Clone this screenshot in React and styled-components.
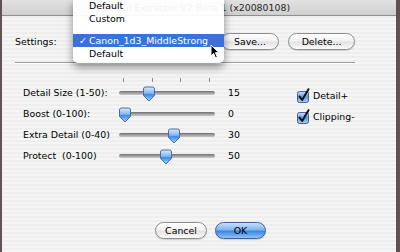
import React from 'react';
import styled, { createGlobalStyle } from 'styled-components';

const Global = createGlobalStyle`
  html, body { margin: 0; padding: 0; background: #5e5252; }
  * { box-sizing: border-box; }
`;

const Screen = styled.div`
  width: 400px;
  height: 252px;
  overflow: hidden;
  display: flex;
  padding: 0 4px 0 2px;
  background: #5e5252;
  font-family: "DejaVu Sans", "Liberation Sans", sans-serif;
  font-size: 9.4px;
  color: #000;
`;

const Window = styled.div`
  flex: 1;
  position: relative;
  display: flex;
  flex-direction: column;
  background: repeating-linear-gradient(to bottom, #eeeeee 0 2px, #f5f5f5 2px 4px);
`;

const TitleBar = styled.div`
  height: 16px;
  display: flex;
  align-items: center;
  justify-content: center;
  background: linear-gradient(#e2e2e2, #cfcfcf);
  border-bottom: 1px solid #8e8e8e;
  color: #262626;
  padding: 0 4px 1px 0;
`;

const Body = styled.div`
  flex: 1;
  display: flex;
  flex-direction: column;
  padding: 17px 0 0 13px;
`;

const SettingsRow = styled.div`
  display: flex;
  align-items: center;
  height: 17px;
`;

const Label = styled.div`
  width: ${({ w }) => w || 'auto'};
  white-space: pre;
`;

const PopupSlot = styled.div`
  width: 148px;
`;

const Button = styled.div`
  height: 17px;
  width: ${({ w }) => w}px;
  margin-left: ${({ ml }) => ml || 0}px;
  border-radius: 9px;
  display: flex;
  align-items: center;
  justify-content: center;
  border: 1px solid ${({ primary }) => (primary ? '#3f5f95' : '#8c8c8c')};
  background: ${({ primary }) =>
    primary
      ? 'linear-gradient(#c6e0fb 0%, #7fb4f0 45%, #3c86e4 55%, #8ec4f8 100%)'
      : 'linear-gradient(#ffffff 0%, #f2f2f2 45%, #e2e2e2 55%, #fbfbfb 100%)'};
  box-shadow: 0 1px 1px rgba(0, 0, 0, 0.15);
`;

const Separator = styled.div`
  width: 340px;
  height: 2px;
  margin-top: 12px;
  border-top: 1px solid #9c9c9c;
  border-bottom: 1px solid #ffffff;
`;

const Controls = styled.div`
  display: flex;
  margin-top: 14px;
  padding-left: 8px;
`;

const Sliders = styled.div`
  display: grid;
  grid-template-columns: 96px 96px 45px;
  grid-template-rows: 4px repeat(4, 21px);
  align-items: center;
`;

const TickRow = styled.div`
  grid-column: 2;
  height: 4px;
  display: flex;
  justify-content: space-between;
  padding: 0 5px 0 4px;
`;

const Tick = styled.div`
  width: 1px;
  height: 4px;
  background: #8a8a8a;
`;

const SliderBox = styled.div`
  position: relative;
  height: 21px;
  display: flex;
  align-items: center;
`;

const Track = styled.div`
  width: 100%;
  height: 4px;
  border-radius: 2px;
  background: linear-gradient(#6f6f6f, #a9a9a9 60%, #c8c8c8);
`;

const ThumbWrap = styled.div`
  position: absolute;
  top: 4px;
  margin-left: -7px;
  line-height: 0;
`;

const Value = styled.div`
  padding-left: 13px;
`;

const Checks = styled.div`
  display: flex;
  flex-direction: column;
  margin-left: 37px;
  padding-top: 7px;
`;

const CheckRow = styled.div`
  height: 21px;
  display: flex;
  align-items: center;
  gap: 3px;
`;

const Footer = styled.div`
  display: flex;
  margin-top: 56px;
  padding-left: 140px;
`;

const Menu = styled.div`
  position: absolute;
  left: 71px;
  top: -1px;
  width: 151px;
  padding-bottom: 3px;
  background: rgba(255, 255, 255, 0.94);
  border-radius: 0 0 5px 5px;
  box-shadow: 0 4px 9px rgba(0, 0, 0, 0.45);
`;

const MenuItem = styled.div`
  height: 13px;
  display: flex;
  align-items: center;
  padding-left: 16px;
  position: relative;
  background: ${({ selected }) => (selected ? '#3a72d8' : 'transparent')};
  color: ${({ selected }) => (selected ? '#fff' : '#000')};
`;

const Mark = styled.span`
  position: absolute;
  left: 6px;
`;

const MenuSep = styled.div`
  height: 9px;
`;

const Cursor = styled.svg`
  position: absolute;
  left: 208px;
  top: 44px;
`;

const sliders = [
  { label: 'Detail Size (1-50):', value: 15, pos: 0.28 },
  { label: 'Boost (0-100):', value: 0, pos: 0 },
  { label: 'Extra Detail (0-40)', value: 30, pos: 0.58 },
  { label: 'Protect  (0-100)', value: 50, pos: 0.49 },
];

const ThumbIcon = () => (
  <svg width="14" height="16" viewBox="0 0 14 16">
    <defs>
      <linearGradient id="tg" x1="0" y1="0" x2="0" y2="1">
        <stop offset="0" stopColor="#d8ecfd" />
        <stop offset="0.45" stopColor="#7fb6f2" />
        <stop offset="0.55" stopColor="#3f8ae6" />
        <stop offset="1" stopColor="#a9d6fb" />
      </linearGradient>
    </defs>
    <path d="M1.5 3 Q1.5 1 3.5 1 H10.5 Q12.5 1 12.5 3 V9.5 L7 15 L1.5 9.5 Z" fill="url(#tg)" stroke="#4d6c9e" strokeWidth="1" />
  </svg>
);

const Slider = ({ pos }) => (
  <SliderBox>
    <Track />
    <ThumbWrap style={{ left: `${6 + pos * 84}px` }}>
      <ThumbIcon />
    </ThumbWrap>
  </SliderBox>
);

const CheckIcon = () => (
  <svg width="13" height="14" viewBox="0 0 13 14" style={{ overflow: 'visible' }}>
    <defs>
      <linearGradient id="cg" x1="0" y1="0" x2="0" y2="1">
        <stop offset="0" stopColor="#c9e2fb" />
        <stop offset="0.5" stopColor="#5d9ae8" />
        <stop offset="1" stopColor="#a8d4fb" />
      </linearGradient>
    </defs>
    <rect x="0.5" y="2.5" width="11" height="11" rx="2" fill="url(#cg)" stroke="#44618f" />
    <path d="M2.6 7.6 L5.2 11 L11.5 0.2" fill="none" stroke="#111" strokeWidth="2" strokeLinecap="round" strokeLinejoin="round" />
  </svg>
);

const App = () => {
  return (
    <Screen>
      <Global />
      <Window>
        <TitleBar>Detail Extractor V2 Beta 1 (x20080108)</TitleBar>
        <Body>
          <SettingsRow>
            <Label w="58px">Settings:</Label>
            <PopupSlot />
            <Button w={58}>Save...</Button>
            <Button w={67} ml={9}>Delete...</Button>
          </SettingsRow>
          <Separator />
          <Controls>
            <Sliders>
              <div />
              <TickRow>
                <Tick /><Tick /><Tick /><Tick />
              </TickRow>
              <div />
              {sliders.map((s) => (
                <React.Fragment key={s.label}>
                  <Label>{s.label}</Label>
                  <Slider pos={s.pos} />
                  <Value>{s.value}</Value>
                </React.Fragment>
              ))}
            </Sliders>
            <Checks>
              <CheckRow><CheckIcon />Detail+</CheckRow>
              <CheckRow><CheckIcon />Clipping-</CheckRow>
            </Checks>
          </Controls>
          <Footer>
            <Button w={52}>Cancel</Button>
            <Button w={51} ml={8} primary>OK</Button>
          </Footer>
        </Body>
        <Menu>
          <MenuItem>Default</MenuItem>
          <MenuItem>Custom</MenuItem>
          <MenuSep />
          <MenuItem selected><Mark>✓</Mark>Canon_1d3_MiddleStrong</MenuItem>
          <MenuItem>Default</MenuItem>
        </Menu>
        <Cursor width="10" height="15" viewBox="0 0 10 15">
          <path d="M1 1 V12 L3.6 9.4 L5.6 14 L7.4 13.2 L5.4 8.7 H9 Z" fill="#000" stroke="#fff" strokeWidth="1" />
        </Cursor>
      </Window>
    </Screen>
  );
};

export default App;
